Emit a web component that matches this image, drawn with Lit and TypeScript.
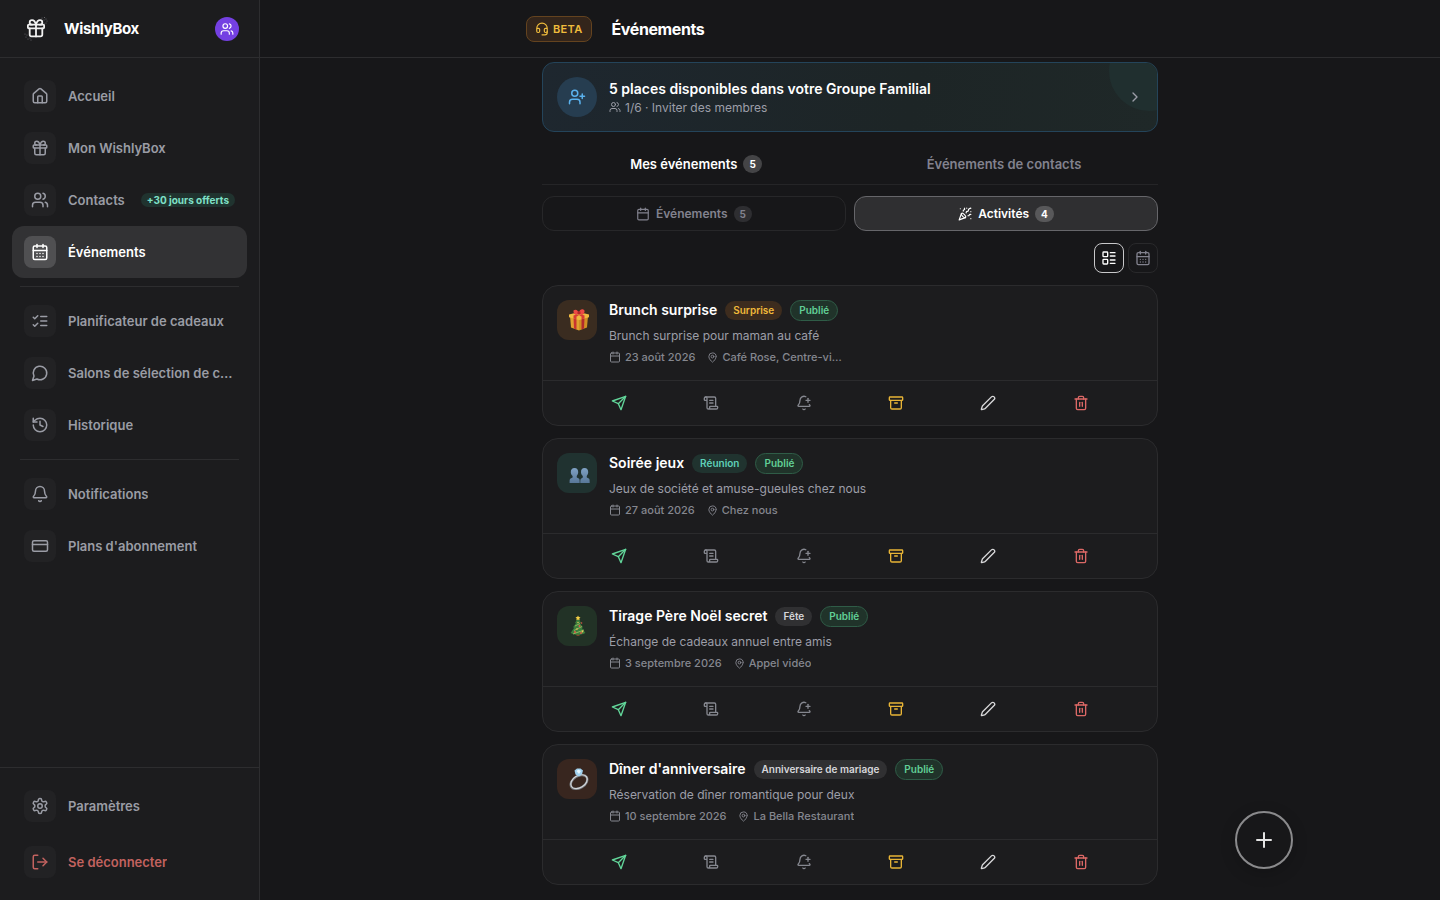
import { LitElement, html, svg, css } from "lit";
import { customElement, property } from "lit/decorators.js";

type Shape = ReturnType<typeof svg>;

const icons: Record<string, Shape> = {
  home: svg`<path d="M15 21v-8a1 1 0 0 0-1-1h-4a1 1 0 0 0-1 1v8"/><path d="M3 10a2 2 0 0 1 .709-1.528l7-5.999a2 2 0 0 1 2.582 0l7 5.999A2 2 0 0 1 21 10v9a2 2 0 0 1-2 2H5a2 2 0 0 1-2-2z"/>`,
  gift: svg`<rect x="3" y="8" width="18" height="4" rx="1"/><path d="M12 8v13"/><path d="M19 12v7a2 2 0 0 1-2 2H7a2 2 0 0 1-2-2v-7"/><path d="M7.5 8a2.5 2.5 0 0 1 0-5A4.8 8 0 0 1 12 8a4.8 8 0 0 1 4.5-5 2.5 2.5 0 0 1 0 5"/>`,
  users: svg`<path d="M16 21v-2a4 4 0 0 0-4-4H6a4 4 0 0 0-4 4v2"/><circle cx="9" cy="7" r="4"/><path d="M22 21v-2a4 4 0 0 0-3-3.87"/><path d="M16 3.13a4 4 0 0 1 0 7.75"/>`,
  calendarDays: svg`<path d="M8 2v4"/><path d="M16 2v4"/><rect width="18" height="18" x="3" y="4" rx="2"/><path d="M3 10h18"/><path d="M8 14h.01"/><path d="M12 14h.01"/><path d="M16 14h.01"/><path d="M8 18h.01"/><path d="M12 18h.01"/><path d="M16 18h.01"/>`,
  calendar: svg`<path d="M8 2v4"/><path d="M16 2v4"/><rect width="18" height="18" x="3" y="4" rx="2"/><path d="M3 10h18"/>`,
  checks: svg`<path d="m3 17 2 2 4-4"/><path d="m3 7 2 2 4-4"/><path d="M13 6h8"/><path d="M13 12h8"/><path d="M13 18h8"/>`,
  chat: svg`<path d="M7.9 20A9 9 0 1 0 4 16.1L2 22Z"/>`,
  history: svg`<path d="M3 12a9 9 0 1 0 9-9 9.75 9.75 0 0 0-6.74 2.74L3 8"/><path d="M3 3v5h5"/><path d="M12 7v5l4 2"/>`,
  bell: svg`<path d="M10.268 21a2 2 0 0 0 3.464 0"/><path d="M3.262 15.326A1 1 0 0 0 4 17h16a1 1 0 0 0 .74-1.673C19.41 13.956 18 12.499 18 8A6 6 0 0 0 6 8c0 4.499-1.411 5.956-2.738 7.326"/>`,
  card: svg`<rect width="20" height="14" x="2" y="5" rx="2"/><path d="M2 10h20"/>`,
  settings: svg`<path d="M12.22 2h-.44a2 2 0 0 0-2 2v.18a2 2 0 0 1-1 1.73l-.43.25a2 2 0 0 1-2 0l-.15-.08a2 2 0 0 0-2.73.73l-.22.38a2 2 0 0 0 .73 2.73l.15.1a2 2 0 0 1 1 1.72v.51a2 2 0 0 1-1 1.74l-.15.09a2 2 0 0 0-.73 2.73l.22.38a2 2 0 0 0 2.73.73l.15-.08a2 2 0 0 1 2 0l.43.25a2 2 0 0 1 1 1.73V20a2 2 0 0 0 2 2h.44a2 2 0 0 0 2-2v-.18a2 2 0 0 1 1-1.73l.43-.25a2 2 0 0 1 2 0l.15.08a2 2 0 0 0 2.73-.73l.22-.39a2 2 0 0 0-.73-2.73l-.15-.08a2 2 0 0 1-1-1.74v-.5a2 2 0 0 1 1-1.74l.15-.09a2 2 0 0 0 .73-2.73l-.22-.38a2 2 0 0 0-2.73-.73l-.15.08a2 2 0 0 1-2 0l-.43-.25a2 2 0 0 1-1-1.73V4a2 2 0 0 0-2-2z"/><circle cx="12" cy="12" r="3"/>`,
  logout: svg`<path d="m16 17 5-5-5-5"/><path d="M21 12H9"/><path d="M9 21H5a2 2 0 0 1-2-2V5a2 2 0 0 1 2-2h4"/>`,
  headset: svg`<path d="M3 11h3a2 2 0 0 1 2 2v3a2 2 0 0 1-2 2H5a2 2 0 0 1-2-2v-5Zm0 0a9 9 0 1 1 18 0m0 0v5a2 2 0 0 1-2 2h-1a2 2 0 0 1-2-2v-3a2 2 0 0 1 2-2h3Z"/><path d="M21 16v2a4 4 0 0 1-4 4h-5"/>`,
  userPlus: svg`<path d="M16 21v-2a4 4 0 0 0-4-4H6a4 4 0 0 0-4 4v2"/><circle cx="9" cy="7" r="4"/><path d="M19 8v6"/><path d="M22 11h-6"/>`,
  chevron: svg`<path d="m9 18 6-6-6-6"/>`,
  party: svg`<path d="M5.8 11.3 2 22l10.7-3.79"/><path d="M4 3h.01"/><path d="M22 8h.01"/><path d="M15 2h.01"/><path d="M22 20h.01"/><path d="m22 2-2.24.75a2.9 2.9 0 0 0-1.96 3.12c.1.86-.57 1.63-1.45 1.63h-.38c-.86 0-1.6.6-1.76 1.44L14 10"/><path d="m22 13-.82-.33c-.86-.34-1.82.2-1.98 1.11c-.11.7-.72 1.22-1.43 1.22H17"/><path d="m11 2 .33.82c.34.86-.2 1.82-1.11 1.98C9.52 4.9 9 5.52 9 6.23V7"/><path d="M11 13c1.93 1.93 2.83 4.17 2 5-.83.83-3.07-.07-5-2-1.93-1.93-2.83-4.17-2-5 .83-.83 3.07.07 5 2Z"/>`,
  list: svg`<rect width="7" height="7" x="3" y="3" rx="1"/><rect width="7" height="7" x="3" y="14" rx="1"/><path d="M14 4h7"/><path d="M14 9h7"/><path d="M14 15h7"/><path d="M14 20h7"/>`,
  pin: svg`<path d="M20 10c0 4.993-5.539 10.193-7.399 11.799a1 1 0 0 1-1.202 0C9.539 20.193 4 14.993 4 10a8 8 0 0 1 16 0"/><circle cx="12" cy="10" r="3"/>`,
  send: svg`<path d="m22 2-7 20-4-9-9-4Z"/><path d="M22 2 11 13"/>`,
  scroll: svg`<path d="M15 12h-5"/><path d="M15 8h-5"/><path d="M19 17V5a2 2 0 0 0-2-2H4"/><path d="M8 21h12a2 2 0 0 0 2-2v-1a1 1 0 0 0-1-1H11a1 1 0 0 0-1 1v1a2 2 0 1 1-4 0V5a2 2 0 1 0-4 0v2a1 1 0 0 0 1 1h3"/>`,
  bellPlus: svg`<path d="M10.268 21a2 2 0 0 0 3.464 0"/><path d="M15 8h6"/><path d="M18 5v6"/><path d="M20.002 14.464a9 9 0 0 0 .738.863A1 1 0 0 1 20 17H4a1 1 0 0 1-.74-1.673C4.59 13.956 6 12.499 6 8a6 6 0 0 1 8.75-5.332"/>`,
  archive: svg`<rect width="20" height="5" x="2" y="3" rx="1"/><path d="M4 8v11a2 2 0 0 0 2 2h12a2 2 0 0 0 2-2V8"/><path d="M10 12h4"/>`,
  pencil: svg`<path d="M21.174 6.812a1 1 0 0 0-3.986-3.987L3.842 16.174a2 2 0 0 0-.5.83l-1.321 4.352a.5.5 0 0 0 .623.622l4.353-1.32a2 2 0 0 0 .83-.497z"/>`,
  trash: svg`<path d="M3 6h18"/><path d="M19 6v14a2 2 0 0 1-2 2H7a2 2 0 0 1-2-2V6"/><path d="M8 6V4a2 2 0 0 1 2-2h4a2 2 0 0 1 2 2v2"/><path d="M10 11v6"/><path d="M14 11v6"/>`,
  plus: svg`<path d="M5 12h14"/><path d="M12 5v14"/>`,
};

const icon = (name: string, size: number, stroke = 2) => html`<svg
  width=${size} height=${size} viewBox="0 0 24 24" fill="none" stroke="currentColor"
  stroke-width=${stroke} stroke-linecap="round" stroke-linejoin="round" aria-hidden="true"
>${icons[name]}</svg>`;

const pictures: Record<string, ReturnType<typeof html>> = {
  gift: html`<svg width="22" height="22" viewBox="0 0 22 22" aria-hidden="true">
    <path d="M2 7 11 9.500v12L3 18.500z" fill="#e0a030"/><path d="M20 7 11 9.500v12l8-3z" fill="#d08f24"/>
    <path d="M5.500 8 8.500 9v11.600l-2.500-1z" fill="#c9342f"/><path d="M13.500 9l3-1-.5 11.600-2.500 1z" fill="#b32a2c"/>
    <path d="M1 5.500 11 3l10 2.500v2.700L11 11 1 8.200z" fill="#efb840"/>
    <path d="m5 4.500 3.500-.8 8 2.800v3l-3 .8V7.500zM17 4.500l-3.500-.8-8 2.800v3l3 .8V7.500z" fill="#d93a36"/>
    <path d="M11 5C8 6 5 5 5.500 1.500 8-.5 10 2 11 3.500 12-.5 15-.5 16.500 1.500 17 5 14 6 11 5z" fill="#ee4a44"/>
    <path d="M9.500 2.500h3v3h-3z" fill="#b9262a"/></svg>`,
  people: html`<svg width="22" height="22" viewBox="0 0 22 22" aria-hidden="true">
    <defs><linearGradient id="blue" x2="0" y2="1"><stop stop-color="#7fa1c4"/><stop offset="1" stop-color="#587798"/></linearGradient></defs>
    <g fill="url(#blue)" transform="translate(0 2)"><path d="M6.500 4c2.600 0 3.900 2 3.700 4.600-.1 1.600-.9 2.700-1.500 3.500l.1 1.400 2 1c.8.500.9 1.600.9 4.500H1.600c0-3 .1-4 1-4.500l2-1V12c-1-1-1.700-2.200-1.800-3.600C2.700 5.700 4 4 6.500 4z"/>
    <path d="M16.500 4c2.600 0 3.900 2 3.700 4.600-.1 1.600-.9 2.700-1.500 3.500l.1 1.400 2 1c.8.500.9 1.600.9 4.500h-9.400c0-3 .1-4 1-4.500l1.500-1V12c-1-1-1.700-2.200-1.800-3.600C12.900 5.700 14 4 16.500 4z"/></g></svg>`,
  tree: html`<svg width="22" height="22" viewBox="0 0 22 22" aria-hidden="true">
    <g transform="translate(-1 0)"><path d="M9.500 18h3v3h-3z" fill="#7a4528"/>
    <path d="M11 2.500 14 8l-1 .3 3 4-1.200.4 3.600 5.300c-4 2.400-10.800 2.400-14.800 0l3.600-5.300L6 12.300l3-4L8 8z" fill="#3b7d3d"/>
    <path d="m8 11 5-2.500M7 15.500l8-4M6 19l11-4" stroke="#8fb45c" stroke-width="1" fill="none"/>
    <path d="m11 .5.8 1.600 1.700.2-1.200 1.200.3 1.700L11 4.400l-1.600.8.3-1.700-1.200-1.200 1.700-.2z" fill="#f4cf45"/>
    <g fill="#e3564a"><circle cx="12.500" cy="11" r="1"/><circle cx="8" cy="17" r="1"/><circle cx="14.500" cy="8" r=".8"/><circle cx="14" cy="18" r=".9"/></g>
    <g fill="#f0c95a"><circle cx="10" cy="14" r=".8"/><circle cx="15.500" cy="16.500" r=".9"/><circle cx="11" cy="7.500" r=".7"/></g></g></svg>`,
  ring: html`<svg width="22" height="22" viewBox="0 0 22 22" aria-hidden="true">
    <ellipse cx="11" cy="14" rx="9" ry="6" transform="rotate(-32 11 14)" fill="none" stroke="#74787d" stroke-width="2.400"/>
    <ellipse cx="11" cy="13.700" rx="9" ry="6" transform="rotate(-32 11 13.700)" fill="none" stroke="#d3d6da" stroke-width="1.200"/>
    <path d="M6.500 2.500 9 .5h3.500l2.500 2-1 3.500-3 2.500-3.500-2z" fill="#9fd0ee"/><path d="m8.500 3 2-1.500L13 3l-2 3z" fill="#e6f6ff"/></svg>`,
};

interface EventItem {
  title: string; tag: string; tone: string; picture: string;
  text: string; date: string; place: string;
}

const events: EventItem[] = [
  { title: "Brunch surprise", tag: "Surprise", tone: "amber", picture: "gift", text: "Brunch surprise pour maman au café", date: "23 août 2026", place: "Café Rose, Centre-ville" },
  { title: "Soirée jeux", tag: "Réunion", tone: "teal", picture: "people", text: "Jeux de société et amuse-gueules chez nous", date: "27 août 2026", place: "Chez nous" },
  { title: "Tirage Père Noël secret", tag: "Fête", tone: "green", picture: "tree", text: "Échange de cadeaux annuel entre amis", date: "3 septembre 2026", place: "Appel vidéo" },
  { title: "Dîner d'anniversaire", tag: "Anniversaire de mariage", tone: "rust", picture: "ring", text: "Réservation de dîner romantique pour deux", date: "10 septembre 2026", place: "La Bella Restaurant" },
];

const actions = [
  ["send", "Partager"], ["scroll", "Détails"], ["bellPlus", "Ajouter un rappel"],
  ["archive", "Archiver"], ["pencil", "Modifier"], ["trash", "Supprimer"],
];

const base = css`
  *, *::before, *::after { box-sizing: border-box; }
  button { font: inherit; color: inherit; background: none; border: 0; padding: 0; cursor: pointer; }
  a { color: inherit; text-decoration: none; }
  h1, h2, p { margin: 0; }
  svg { display: block; flex: none; }
`;

@customElement("side-nav")
class SideNav extends LitElement {
  static styles = [base, css`
    :host { display: flex; flex-direction: column; background: #1c1c1e; border-right: 1px solid #2d2d2f; color: #9a9ca5; }
    .brand { display: flex; align-items: center; height: 58px; padding: 0 20px 0 24px; border-bottom: 1px solid #2d2d2f; flex: none; }
    .logo { color: #f2f2f2; }
    .name { flex: 1; margin-left: 16px; color: #fff; font-size: 15px; font-weight: 700; line-height: 20px; letter-spacing: -0.025em; }
    .group { display: grid; place-items: center; width: 24px; height: 24px; border-radius: 50%; background: #7440e2; color: #fff; }
    .links { flex: 1; padding: 12px; }
    .link { display: flex; align-items: center; gap: 12px; width: 100%; height: 52px; padding: 0 12px; border-radius: 12px; font-size: 13px; font-weight: 600; line-height: 20px; text-align: left; }
    .tile { display: grid; place-items: center; flex: none; width: 32px; height: 32px; border-radius: 8px; background: #222224; }
    .text { overflow: hidden; white-space: nowrap; text-overflow: ellipsis; }
    .current { background: #323234; color: #fff; }
    .current .tile { background: #505052; }
    .offer { flex: none; margin-left: auto; padding: 0 6px; border-radius: 8px; background: #20332f; color: #7fe0c7; font-size: 10px; font-weight: 700; line-height: 14px; white-space: nowrap; }
    .rule { height: 1px; margin: 8px; background: #2d2d2f; }
    .foot { display: grid; gap: 4px; padding: 12px; border-top: 1px solid #2d2d2f; }
    .out { color: #c2625f; }
  `];

  link(name: string, label: string, extra = "", offer = "") {
    return html`<a class="link ${extra}" href="#" aria-current=${extra === "current" ? "page" : "false"}>
      <span class="tile">${icon(name, 18)}</span><span class="text">${label}</span>
      ${offer ? html`<span class="offer">${offer}</span>` : ""}</a>`;
  }

  render() {
    return html`
      <div class="brand">
        <svg class="logo" width="24" height="24" viewBox="0 0 24 24" fill="none" stroke="currentColor" stroke-width="2" stroke-linecap="round" stroke-linejoin="round" aria-hidden="true">
          <path d="M18 1h.01M20.500 0.500h.01M22 2h.01M20 3h.01M23 4h.01M22 6h.01M20.500 7h.01M1 17h.01M3 18h.01M2 20h.01M4 22h.01M6 21h.01M7 23h.01" stroke="#66666a" stroke-width="1.200"/>
          <g transform="translate(1.200 0.500) scale(.9)">${icons.gift}</g>
        </svg>
        <span class="name">WishlyBox</span>
        <button class="group" aria-label="Groupe familial">${icon("users", 14)}</button>
      </div>
      <nav class="links">
        ${this.link("home", "Accueil")}
        ${this.link("gift", "Mon WishlyBox")}
        ${this.link("users", "Contacts", "", "+30 jours offerts")}
        ${this.link("calendarDays", "Événements", "current")}
        <div class="rule"></div>
        ${this.link("checks", "Planificateur de cadeaux")}
        ${this.link("chat", "Salons de sélection de cadeaux")}
        ${this.link("history", "Historique")}
        <div class="rule"></div>
        ${this.link("bell", "Notifications")}
        ${this.link("card", "Plans d'abonnement")}
      </nav>
      <div class="foot">
        ${this.link("settings", "Paramètres")}
        <button class="link out"><span class="tile">${icon("logout", 18)}</span><span class="text">Se déconnecter</span></button>
      </div>`;
  }
}

@customElement("event-card")
class EventCard extends LitElement {
  @property({ attribute: false }) item!: EventItem;

  static styles = [base, css`
    :host { display: block; border: 1px solid #2b2b2d; border-radius: 16px; background: #1c1c1e; }
    .body { display: flex; gap: 12px; padding: 14px 14px 13px; }
    .picture { display: grid; place-items: center; flex: none; width: 40px; height: 40px; padding-left: 3px; border-radius: 12px; background: #3a2c20; }
    .picture.teal { background: #203230; }
    .picture.green { background: #223226; }
    .picture.rust { background: #38261f; }
    .info { flex: 1; min-width: 0; }
    .head { display: flex; align-items: center; gap: 8px; height: 20px; }
    .title { color: #fff; font-size: 14px; font-weight: 600; line-height: 20px; white-space: nowrap; }
    .tag, .state { border-radius: 11px; font-size: 10px; font-weight: 600; line-height: 19px; padding: 0 8px; white-space: nowrap; }
    .tag { background: #303032; color: #d6d6da; }
    .tag.amber { background: #3d2c1e; color: #f0b93a; }
    .tag.teal { background: #20332f; color: #5fd0b8; }
    .state { border: 1px solid #2f5c47; background: #20332a; color: #62cf97; }
    .text { margin-top: 6px; color: #9c9ea8; font-size: 12px; line-height: 20px; }
    .meta { display: flex; gap: 12px; margin-top: 1px; color: #85878f; font-size: 11px; font-weight: 500; line-height: 20px; }
    .fact { display: flex; align-items: center; gap: 4px; }
    .place { max-width: 120px; overflow: hidden; white-space: nowrap; text-overflow: ellipsis; }
    .bar { display: grid; grid-template-columns: repeat(6, 1fr); padding: 0 30px; height: 45px; border-top: 1px solid #2b2b2d; }
    .bar button { display: grid; place-items: center; color: #85878f; }
    .bar .send { color: #62d69a; }
    .bar .archive { color: #e8b436; }
    .bar .pencil { color: #d8d8da; }
    .bar .trash { color: #dc6866; }
  `];

  render() {
    const e = this.item;
    return html`
      <div class="body">
        <div class="picture ${e.tone}">${pictures[e.picture]}</div>
        <div class="info">
          <div class="head"><h2 class="title">${e.title}</h2><span class="tag ${e.tone}">${e.tag}</span><span class="state">Publié</span></div>
          <p class="text">${e.text}</p>
          <div class="meta">
            <span class="fact">${icon("calendar", 12)}${e.date}</span>
            <span class="fact">${icon("pin", 11)}<span class="place">${e.place}</span></span>
          </div>
        </div>
      </div>
      <div class="bar">${actions.map(([n, label]) => html`<button class=${n} aria-label=${label}>${icon(n, 16)}</button>`)}</div>`;
  }
}

@customElement("app-root")
class AppRoot extends LitElement {
  static styles = [base, css`
    :host { display: grid; grid-template-columns: 260px minmax(0, 1fr); min-height: 100vh; background: #171719; color: #fff; font-family: Inter, sans-serif; }
    .side { position: sticky; top: 0; height: 100vh; }
    .top { height: 58px; border-bottom: 1px solid #2d2d2f; }
    .title-row { display: flex; align-items: center; gap: 20px; width: 100%; max-width: 648px; height: 57px; margin: 0 auto; }
    .beta { display: flex; align-items: center; gap: 4px; height: 26px; padding: 0 8px; border: 1px solid #64431f; border-radius: 8px; background: #33251b; color: #f0bc3c; font-size: 11px; font-weight: 600; letter-spacing: 0.03em; }
    .title { font-size: 16px; font-weight: 700; line-height: 24px; letter-spacing: -0.025em; }
    .column { width: 100%; max-width: 648px; margin: 0 auto; padding: 4px 16px 16px; }
    .banner { position: relative; display: flex; align-items: center; gap: 12px; width: 100%; height: 70px; padding: 0 14px; overflow: hidden; border: 1px solid #24445a; border-radius: 12px; background: linear-gradient(100deg, #1e272f, #1d2526 60%, #1f2828); text-align: left; }
    .glow { position: absolute; top: -32px; right: -32px; width: 80px; height: 80px; border-radius: 50%; background: #202f2f; }
    .badge { display: grid; place-items: center; width: 40px; height: 40px; border-radius: 50%; background: #263d50; color: #5ab2ee; }
    .pitch { flex: 1; }
    .lead { display: block; font-size: 14px; font-weight: 600; line-height: 20px; }
    .sub { display: flex; align-items: center; gap: 4px; color: #9c9ea8; font-size: 12px; line-height: 17px; }
    .arrow { position: relative; color: #9c9ea8; }
    .tabs { display: grid; grid-template-columns: 1fr 1fr; margin-top: 12px; border-bottom: 1px solid #252527; }
    .tab { display: flex; align-items: center; justify-content: center; gap: 6px; height: 40px; color: #82828e; font-size: 13px; font-weight: 600; }
    .tab.on { color: #fff; }
    .count { display: grid; place-items: center; min-width: 18px; height: 18px; padding: 0 6px; border-radius: 9px; background: #444446; color: #fff; font-size: 10px; font-weight: 700; }
    .pills { display: grid; grid-template-columns: 1fr 1fr; gap: 8px; margin-top: 11px; }
    .pill { display: flex; align-items: center; justify-content: center; gap: 6px; height: 35px; border: 1px solid #272729; border-radius: 12px; color: #82828e; font-size: 12px; font-weight: 600; }
    .pill .count { height: 16px; background: #2e2e31; color: #82828e; }
    .pill.on { border-color: #66666a; background: #2f2f31; color: #fff; }
    .pill.on .count { background: #58585a; color: #fff; }
    .views { display: flex; justify-content: flex-end; gap: 4px; margin-top: 12px; }
    .view { display: grid; place-items: center; width: 30px; height: 30px; border: 1px solid #29292b; border-radius: 8px; color: #82828e; }
    .view.on { border-color: #c8c8ca; color: #fff; }
    .list { display: grid; gap: 12px; margin-top: 12px; }
    .add { position: fixed; right: 147px; bottom: 31px; display: grid; place-items: center; width: 58px; height: 58px; border: 2px solid #8a8a8c; border-radius: 50%; background: #171719; color: #e4e4e4; box-shadow: 0 4px 16px rgb(0 0 0 / 20%); }
  `];

  render() {
    return html`
      <side-nav class="side"></side-nav>
      <main>
        <header class="top"><div class="title-row">
          <button class="beta">${icon("headset", 14)}BETA</button>
          <h1 class="title">Événements</h1>
        </div></header>
        <div class="column">
          <button class="banner">
            <span class="glow"></span>
            <span class="badge">${icon("userPlus", 18)}</span>
            <span class="pitch">
              <span class="lead">5 places disponibles dans votre Groupe Familial</span>
              <span class="sub">${icon("users", 12)}1/6 · Inviter des membres</span>
            </span>
            <span class="arrow">${icon("chevron", 16)}</span>
          </button>
          <div class="tabs" role="tablist">
            <button class="tab on" role="tab" aria-selected="true">Mes événements<span class="count">5</span></button>
            <button class="tab" role="tab" aria-selected="false">Événements de contacts</button>
          </div>
          <div class="pills">
            <button class="pill">${icon("calendar", 14)}Événements<span class="count">5</span></button>
            <button class="pill on">${icon("party", 14)}Activités<span class="count">4</span></button>
          </div>
          <div class="views">
            <button class="view on" aria-label="Vue liste">${icon("list", 16)}</button>
            <button class="view" aria-label="Vue calendrier">${icon("calendarDays", 16)}</button>
          </div>
          <div class="list">${events.map((e) => html`<event-card .item=${e}></event-card>`)}</div>
        </div>
      </main>
      <button class="add" aria-label="Ajouter">${icon("plus", 24)}</button>`;
  }
}
